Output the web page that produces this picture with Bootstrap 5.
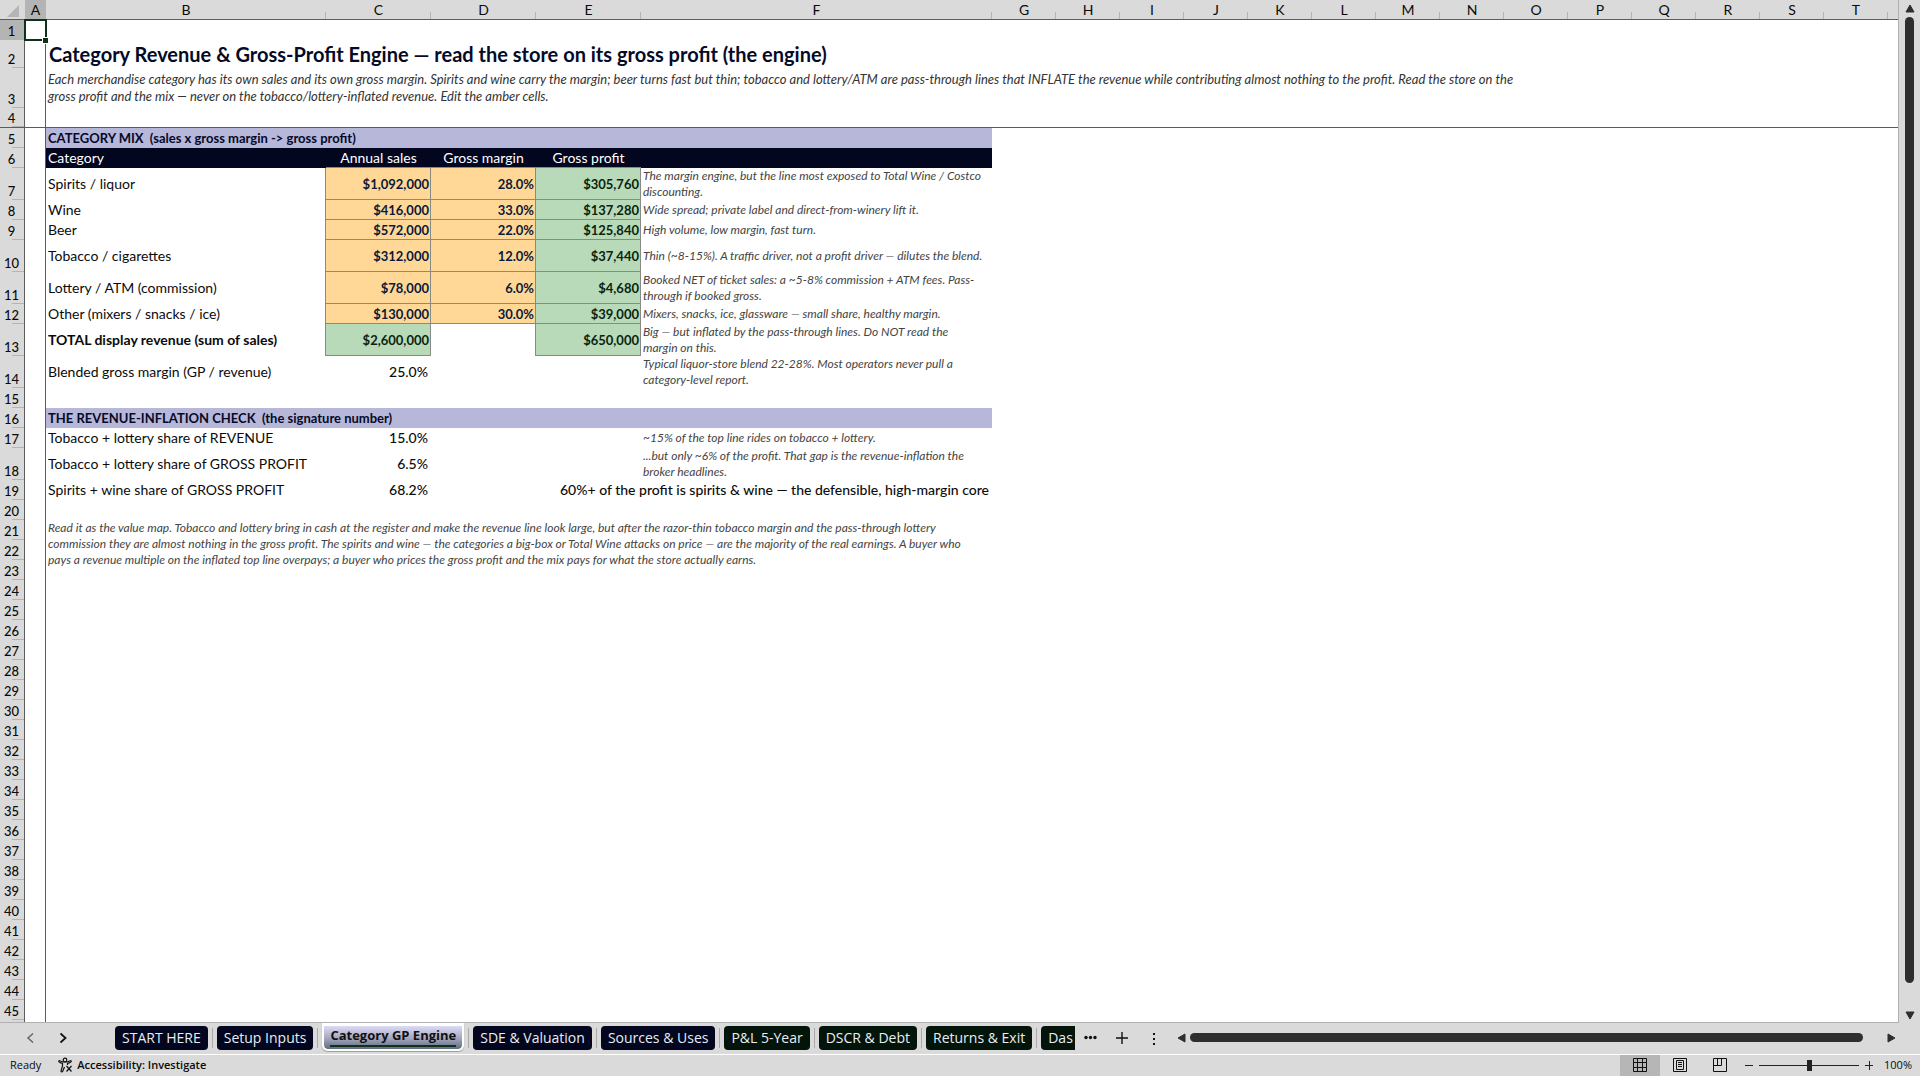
<!DOCTYPE html>
<html lang="en">
<head>
<meta charset="utf-8">
<meta name="viewport" content="width=device-width, initial-scale=1">
<title>Category GP Engine</title>
<link href="https://cdn.jsdelivr.net/npm/bootstrap@5.3.0/dist/css/bootstrap.min.css" rel="stylesheet">
<style>
:root{--chrome:#dadada;--ink:#0b0b0b;--navy:#02061f;--lav:#b7b7da;--amber:#ffd898;--mint:#b9dab8;--rule:#8a8a84;--dark:#5c5c5c;--tick:#b4b4b4;--thumb:#2e2e2e}
body{background:var(--chrome);color:var(--ink);font-family:Lato,"Liberation Sans",sans-serif;font-size:14px;line-height:20px}
.pane{background:#fff;border-right:1px solid #b0b0b0;border-bottom:1px solid #b0b0b0;min-height:0}
.sheet{table-layout:fixed;border-collapse:separate;border-spacing:0;width:100%}
.sheet th,.sheet td{padding:0 2px;white-space:nowrap;height:20px;vertical-align:middle;line-height:16px}
.sheet thead th{background:var(--chrome);border-bottom:1px solid var(--dark);font-weight:400;text-align:center;line-height:18px;background-image:linear-gradient(var(--tick),var(--tick));background-size:1px 7px;background-position:right bottom;background-repeat:no-repeat;padding:1px 0 0}
.sheet thead th.plain{background-image:none}
.sheet tbody th{background:var(--chrome) linear-gradient(var(--tick),var(--tick)) right bottom/12px 1px no-repeat;border-right:1px solid var(--dark);font-size:13px;font-weight:500;text-align:center;vertical-align:bottom;padding:0 1px 0 0;line-height:18px}
.sheet .sel{background-color:#b4b4b4!important}
.colA{border-right:1px solid var(--dark)}
.h28>*{height:28px!important}.h40>*{height:40px!important}.h32>*{height:32px!important}
.freeze>*{border-bottom:1px solid var(--dark)}
.cursor-cell{outline:2px solid #10301a;outline-offset:-1px;position:relative}
.cursor-cell::after{content:"";position:absolute;right:-3px;bottom:-3px;width:5px;height:5px;background:#10301a;outline:1px solid #fff}
.sheet .ttl{font-size:20px;font-weight:700;color:#050a26;line-height:24px;padding-left:3px}
.sheet .sub{font-size:13px;font-style:italic;color:#333;line-height:17px}
.sheet .note{font-size:12px;font-style:italic;color:#444}
.band{background:var(--lav);font-size:13px;font-weight:700;color:#050a26}
.heads td{background:var(--navy);color:#fff}
.heads .ul{border-bottom:1px solid var(--rule)}
.edge{border-right:1px solid var(--rule)}
.inp,.out{font-size:13px;font-weight:700;text-align:right;border-right:1px solid var(--rule);border-bottom:1px solid var(--rule)}
.sheet .inp,.sheet .out{padding-right:1px}
.inp{background:var(--amber);color:#0a1a38}.out{background:var(--mint);color:#0a2410}
.val{text-align:right;font-weight:500}
.sheet .val{padding-right:3px}
.vbar{width:21px;padding:4px 0 3px}
.hbar .thumb,.vbar .thumb{background:var(--thumb);border-radius:5px}
.vbar .thumb{width:9px;margin:4px 0 28px}
.hbar .thumb{height:9px;margin:0 24px 0 4px}
.ico{background:none;border:0;padding:0;line-height:0;color:#222}
.tabs{height:31px;padding-bottom:2px;font-family:"Open Sans","Noto Sans",sans-serif;font-size:14px}
.arrows{width:113px}
.tabset{width:962px;padding-left:2px}
.tabs .tab{flex:none;height:24px;line-height:23px;border-radius:4px;color:#e8edf5;background:var(--navy);text-decoration:none;text-align:center;white-space:nowrap;padding:0 7px}
.tabs .grn{background:#03140a}
.tabs .cut{border-radius:4px 0 0 4px;flex:1 0 0;text-align:left}
.sep{flex:none;width:1px;height:20px;background:#aaa;margin:0 4px}
.tabs .on{height:28px;align-self:flex-start;border:2px solid #fff;border-top-width:3px;border-radius:0 0 6px 6px;background:linear-gradient(#dcdcf6,#a9a9c4 50%,#5d6c7c) padding-box;color:#101010;font-size:13px;font-weight:700;line-height:19px;box-shadow:0 1px 1px #999;padding:0 6px}
.tabs .on span{display:block;border-bottom:2px solid #10301a;height:21px}
.status{height:22px;padding-bottom:1px;border-top:1px solid #fff;font-family:"Open Sans","Noto Sans",sans-serif;font-size:11px}
.ready{padding-left:10px}
.views .ico{width:40px;height:21px}
.views .act{background:#b6b6b6}
.zoomer{appearance:none;width:100px;height:12px;background:linear-gradient(#222,#222) center/100% 1px no-repeat;margin:0 5px}
.zoomer::-webkit-slider-thumb{appearance:none;width:5px;height:11px;background:#222;border-radius:0}
.pct{padding-left:10px}
</style>
</head>
<body class="d-flex flex-column vh-100 overflow-hidden">
<main class="d-flex flex-grow-1 overflow-hidden">
<div class="pane flex-grow-1 overflow-hidden">
<table class="sheet">
<colgroup><col style="width:25px"><col style="width:21px"><col style="width:280px"><col style="width:105px"><col style="width:105px"><col style="width:105px"><col style="width:351px"><col span="14" style="width:64px"><col></colgroup>
<thead><tr><th class="plain" aria-label="Select all"><svg width="14" height="14" viewBox="0 0 14 14"><path d="M13 1v12H1z" fill="#b4b4b4"/></svg></th><th class="sel plain">A</th><th>B</th><th>C</th><th>D</th><th>E</th><th>F</th><th>G</th><th>H</th><th>I</th><th>J</th><th>K</th><th>L</th><th>M</th><th>N</th><th>O</th><th>P</th><th>Q</th><th>R</th><th>S</th><th>T</th><th class="plain"></th></tr></thead>
<tbody id="grid">
<tr><th class="sel">1</th><td class="colA cursor-cell"></td><td colspan="20"></td></tr>
<tr class="h28"><th>2</th><td class="colA"></td><td colspan="20" class="ttl">Category Revenue &amp; Gross-Profit Engine — read the store on its gross profit (the engine)</td></tr>
<tr class="h40"><th>3</th><td class="colA"></td><td colspan="20" class="sub">Each merchandise category has its own sales and its own gross margin. Spirits and wine carry the margin; beer turns fast but thin; tobacco and lottery/ATM are pass-through lines that INFLATE the revenue while contributing almost nothing to the profit. Read the store on the<br>gross profit and the mix — never on the tobacco/lottery-inflated revenue. Edit the amber cells.</td></tr>
<tr class="freeze"><th>4</th><td class="colA"></td><td colspan="20"></td></tr>
<tr><th>5</th><td class="colA"></td><td colspan="5" class="band">CATEGORY MIX&nbsp; (sales x gross margin -&gt; gross profit)</td></tr>
<tr class="heads"><th>6</th><td class="colA bg-white"></td><td>Category</td><td class="text-center ul">Annual sales</td><td class="text-center ul">Gross margin</td><td class="text-center ul">Gross profit</td><td></td></tr>
<tr class="h32"><th>7</th><td class="colA"></td><td class="edge">Spirits / liquor</td><td class="inp">$1,092,000</td><td class="inp">28.0%</td><td class="out">$305,760</td><td class="note">The margin engine, but the line most exposed to Total Wine / Costco<br>discounting.</td></tr>
<tr><th>8</th><td class="colA"></td><td class="edge">Wine</td><td class="inp">$416,000</td><td class="inp">33.0%</td><td class="out">$137,280</td><td class="note">Wide spread; private label and direct-from-winery lift it.</td></tr>
<tr><th>9</th><td class="colA"></td><td class="edge">Beer</td><td class="inp">$572,000</td><td class="inp">22.0%</td><td class="out">$125,840</td><td class="note">High volume, low margin, fast turn.</td></tr>
<tr class="h32"><th>10</th><td class="colA"></td><td class="edge">Tobacco / cigarettes</td><td class="inp">$312,000</td><td class="inp">12.0%</td><td class="out">$37,440</td><td class="note">Thin (~8-15%). A traffic driver, not a profit driver — dilutes the blend.</td></tr>
<tr class="h32"><th>11</th><td class="colA"></td><td class="edge">Lottery / ATM (commission)</td><td class="inp">$78,000</td><td class="inp">6.0%</td><td class="out">$4,680</td><td class="note">Booked NET of ticket sales: a ~5-8% commission + ATM fees. Pass-<br>through if booked gross.</td></tr>
<tr><th>12</th><td class="colA"></td><td class="edge">Other (mixers / snacks / ice)</td><td class="inp">$130,000</td><td class="inp">30.0%</td><td class="out">$39,000</td><td class="note">Mixers, snacks, ice, glassware — small share, healthy margin.</td></tr>
<tr class="h32"><th>13</th><td class="colA"></td><td class="edge fw-bold">TOTAL display revenue (sum of sales)</td><td class="out">$2,600,000</td><td class="edge"></td><td class="out">$650,000</td><td class="note">Big — but inflated by the pass-through lines. Do NOT read the<br>margin on this.</td></tr>
<tr class="h32"><th>14</th><td class="colA"></td><td>Blended gross margin (GP / revenue)</td><td class="val">25.0%</td><td></td><td></td><td class="note">Typical liquor-store blend 22-28%. Most operators never pull a<br>category-level report.</td></tr>
<tr><th>15</th><td class="colA"></td></tr>
<tr><th>16</th><td class="colA"></td><td colspan="5" class="band">THE REVENUE-INFLATION CHECK&nbsp; (the signature number)</td></tr>
<tr><th>17</th><td class="colA"></td><td>Tobacco + lottery share of REVENUE</td><td class="val">15.0%</td><td></td><td></td><td class="note">~15% of the top line rides on tobacco + lottery.</td></tr>
<tr class="h32"><th>18</th><td class="colA"></td><td>Tobacco + lottery share of GROSS PROFIT</td><td class="val">6.5%</td><td></td><td></td><td class="note">...but only ~6% of the profit. That gap is the revenue-inflation the<br>broker headlines.</td></tr>
<tr><th>19</th><td class="colA"></td><td>Spirits + wine share of GROSS PROFIT</td><td class="val">68.2%</td><td></td><td class="val" colspan="2">60%+ of the profit is spirits &amp; wine — the defensible, high-margin core</td></tr>
<tr><th>20</th><td class="colA"></td></tr>
<tr><th>21</th><td class="colA"></td><td colspan="5" rowspan="3" class="note align-top">Read it as the value map. Tobacco and lottery bring in cash at the register and make the revenue line look large, but after the razor-thin tobacco margin and the pass-through lottery<br>commission they are almost nothing in the gross profit. The spirits and wine — the categories a big-box or Total Wine attacks on price — are the majority of the real earnings. A buyer who<br>pays a revenue multiple on the inflated top line overpays; a buyer who prices the gross profit and the mix pays for what the store actually earns.</td></tr>
<tr><th>22</th><td class="colA"></td></tr>
<tr><th>23</th><td class="colA"></td></tr>
</tbody>
</table>
</div>
<div class="vbar d-flex flex-column align-items-center flex-shrink-0">
<button class="ico" aria-label="Scroll up"><svg width="10" height="9" viewBox="0 0 10 9"><path d="M5 1l4 7H1z" fill="#2e2e2e" stroke="#2e2e2e" stroke-linejoin="round"/></svg></button>
<div class="thumb flex-grow-1"></div>
<button class="ico" aria-label="Scroll down"><svg width="10" height="9" viewBox="0 0 10 9"><path d="M5 8L1 1h8z" fill="#2e2e2e" stroke="#2e2e2e" stroke-linejoin="round"/></svg></button>
</div>
</main>
<nav class="tabs d-flex align-items-center flex-shrink-0" aria-label="Sheets">
<div class="arrows d-flex ps-4 flex-shrink-0">
<button class="ico" aria-label="Previous sheet"><svg width="12" height="14" viewBox="0 0 12 14" fill="none" stroke="#666" stroke-width="1.500"><path d="M9 2.500L4 7l5 4.500"/></svg></button>
<button class="ico ms-4" aria-label="Next sheet"><svg width="12" height="14" viewBox="0 0 12 14" fill="none" stroke="#111" stroke-width="1.800"><path d="M.5 2.500l5 4.500-5 4.500"/></svg></button>
</div>
<div class="tabset d-flex align-items-center overflow-hidden flex-shrink-0 align-self-stretch">
<a class="tab" href="#">START HERE</a><i class="sep"></i><a class="tab" href="#">Setup Inputs</a><i class="sep"></i><a class="tab on" href="#" aria-current="page"><span>Category GP Engine</span></a><i class="sep"></i><a class="tab" href="#">SDE &amp; Valuation</a><i class="sep"></i><a class="tab" href="#">Sources &amp; Uses</a><i class="sep"></i><a class="tab grn" href="#">P&amp;L 5-Year</a><i class="sep"></i><a class="tab grn" href="#">DSCR &amp; Debt</a><i class="sep"></i><a class="tab grn" href="#">Returns &amp; Exit</a><i class="sep"></i><a class="tab grn cut" href="#">Das</a>
</div>
<div class="hbar d-flex align-items-center flex-grow-1 ps-2">
<button class="ico" aria-label="More sheets"><svg width="14" height="5" viewBox="0 0 14 5" fill="#111"><circle cx="3" cy="2.500" r="1.700"/><circle cx="7.500" cy="2.500" r="1.700"/><circle cx="12" cy="2.500" r="1.700"/></svg></button>
<button class="ico ms-3" aria-label="New sheet"><svg width="18" height="14" viewBox="0 0 18 14" stroke="#111" stroke-width="1.400"><path d="M9 1v12M3 7h12"/></svg></button>
<span class="px-3 mx-1"><svg class="d-block" width="6" height="14" viewBox="0 0 6 14" fill="#111"><path d="M2 2h2v2H2zM2 7h2v2H2zM2 12h2v2H2z"/></svg></span>
<button class="ico" aria-label="Scroll left"><svg width="9" height="10" viewBox="0 0 9 10"><path d="M1 5l7-4v8z" fill="#2e2e2e" stroke="#2e2e2e" stroke-linejoin="round"/></svg></button>
<div class="thumb flex-grow-1"></div>
<button class="ico me-4" aria-label="Scroll right"><svg width="9" height="10" viewBox="0 0 9 10"><path d="M8 5L1 1v8z" fill="#2e2e2e" stroke="#2e2e2e" stroke-linejoin="round"/></svg></button>
</div>
</nav>
<footer class="status d-flex align-items-center flex-shrink-0 pe-2">
<span class="ready me-auto d-flex align-items-center"><span>Ready</span>
<button class="ico d-flex align-items-center ms-3" aria-label="Accessibility checker"><svg width="16" height="16" viewBox="0 0 16 16" fill="none" stroke="#111" stroke-width="1.200"><circle cx="8" cy="3" r="1.800"/><path d="M2 3.500c-.8 1 0 1.700 1.200 2.100L5.500 6.500V9L4 14c0 1.200 1.300 1.200 1.700.3L7.500 10M14 3.500c.8 1 0 1.700-1.200 2.100L10.500 6.500V8M9.500 9l5 5.500M14.500 9l-5 5.500M2 3.500l4 1.500h4l4-1.500"/></svg></button><span class="fw-semibold ps-1">Accessibility: Investigate</span></span>
<div class="views d-flex">
<button class="ico act" aria-label="Normal view"><svg width="14" height="14" viewBox="0 0 14 14" fill="none" stroke="#111"><path d="M.5.5h13v13H.5zM4.500 0v14M9.500 0v14M0 4.500h14M0 9.500h14"/></svg></button>
<button class="ico" aria-label="Page layout"><svg width="14" height="14" viewBox="0 0 14 14" fill="none" stroke="#111"><path d="M.5.5h13v13H.5zM3.500 2.500h7v9h-7zM5 4.500h4M5 6.500h4M5 8.500h4"/></svg></button>
<button class="ico" aria-label="Page break preview"><svg width="14" height="14" viewBox="0 0 14 14" fill="none" stroke="#111"><path d="M.5.5h13v13H.5zM4.500 0v7.500M.5 7.500h8V0"/></svg></button>
</div>
<button class="ico ms-1" aria-label="Zoom out"><svg width="10" height="10" viewBox="0 0 10 10" stroke="#222"><path d="M1 5.500h8"/></svg></button>
<input class="zoomer" type="range" aria-label="Zoom" min="0" max="100" value="50">
<button class="ico" aria-label="Zoom in"><svg width="10" height="10" viewBox="0 0 10 10" stroke="#222"><path d="M1 5.500h8M5.500 1v9"/></svg></button>
<span class="pct">100%</span>
</footer>
<script src="https://cdn.jsdelivr.net/npm/bootstrap@5.3.0/dist/js/bootstrap.bundle.min.js"></script>
<script>
const grid=document.getElementById('grid');
for(let n=24;n<=45;n++){grid.insertAdjacentHTML('beforeend',`<tr><th>${n}</th><td class="colA"></td></tr>`);}
grid.insertAdjacentHTML('beforeend','<tr><th></th><td class="colA"></td></tr>');
</script>
</body>
</html>
